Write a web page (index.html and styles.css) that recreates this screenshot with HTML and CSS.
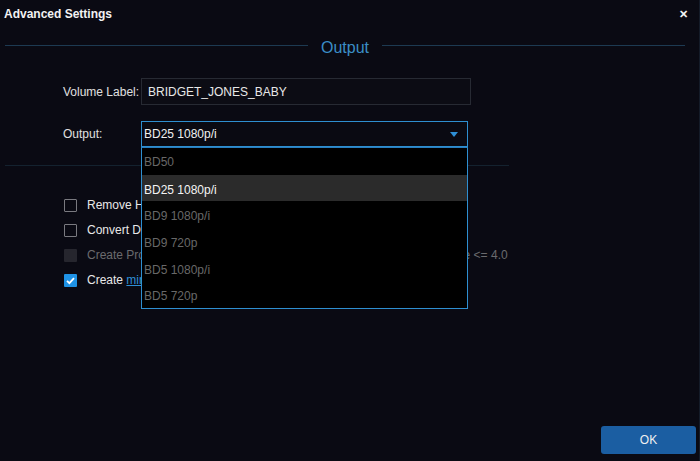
FILE: index.html
```html
<!DOCTYPE html>
<html>
<head>
<meta charset="utf-8">
<link rel="stylesheet" href="styles.css">
</head>
<body>
<div class="window">
  <div class="titlebar">
    <span class="title">Advanced Settings</span>
    <span class="close">&#x2715;</span>
  </div>
  <div class="section-head">
    <span class="line"></span>
    <span class="section-title">Output</span>
    <span class="line"></span>
  </div>
  <div class="form">
    <div class="row">
      <label class="lbl">Volume Label:</label>
      <div class="input">BRIDGET_JONES_BABY</div>
    </div>
    <div class="row row-output">
      <label class="lbl">Output:</label>
      <div class="select-wrap">
        <div class="select">
          <span>BD25 1080p/i</span>
          <svg class="arrow" width="8" height="5" viewBox="0 0 8 5"><path d="M0 0 L8 0 L4 5 Z" fill="#2e8fd6"/></svg>
        </div>
        <ul class="dropdown">
          <li>BD50</li>
          <li class="active">BD25 1080p/i</li>
          <li>BD9 1080p/i</li>
          <li>BD9 720p</li>
          <li>BD5 1080p/i</li>
          <li>BD5 720p</li>
        </ul>
      </div>
    </div>
  </div>
  <div class="divider"></div>
  <div class="checks">
    <div class="check"><span class="box"></span><span class="ctext">Remove HDR</span></div>
    <div class="check"><span class="box"></span><span class="ctext">Convert DTS</span></div>
    <div class="check disabled"><span class="box"></span><span class="ctext">Create Progressive streams for players that only support HD AVC profile &lt;= 4.0</span></div>
    <div class="check"><span class="box checked"><svg width="13" height="13" viewBox="0 0 13 13"><path d="M3 6.8 L5.4 9.2 L10 4.2" fill="none" stroke="#fff" stroke-width="1.8"/></svg></span><span class="ctext">Create <a class="link">mini ISO</a></span></div>
  </div>
  <div class="spacer"></div>
  <div class="footer">
    <button class="ok">OK</button>
  </div>
</div>
</body>
</html>
```
FILE: styles.css
```css
html, body {
  margin: 0;
  padding: 0;
  background: #0a0a13;
}
body {
  font-family: "Liberation Sans", Arial, sans-serif;
  font-size: 12px;
  color: #e6e6e6;
}
.window {
  width: 700px;
  height: 461px;
  display: flex;
  flex-direction: column;
  box-sizing: border-box;
  border-right: 1px solid #141b28;
  overflow: hidden;
}
.titlebar {
  height: 28px;
  display: flex;
  align-items: center;
  justify-content: space-between;
  padding: 0 11px 0 4px;
}
.title {
  font-weight: bold;
  font-size: 12px;
  color: #f2f2f2;
}
.close {
  font-weight: bold;
  font-size: 11px;
  color: #f2f2f2;
}
.section-head {
  height: 22px;
  margin-top: 8px;
  display: flex;
  align-items: center;
  padding: 0 14px 0 5px;
  gap: 13px;
}
.section-head .line {
  flex: 1;
  height: 1px;
  background: #1d3a52;
  margin-top: -4px;
}
.section-title {
  color: #3b8ec6;
  font-size: 16px;
  margin-top: 1px;
}
.form {
  margin-top: 20px;
  padding-left: 63px;
  display: flex;
  flex-direction: column;
  gap: 16px;
}
.row {
  display: flex;
  align-items: center;
}
.lbl {
  width: 78px;
  color: #e0e0e0;
}
.input {
  box-sizing: border-box;
  width: 330px;
  height: 27px;
  border: 1px solid #272a33;
  background: #0c0c14;
  display: flex;
  align-items: center;
  padding-left: 6px;
  color: #e8e8e8;
}
.select-wrap {
  position: relative;
}
.select {
  box-sizing: border-box;
  width: 327px;
  height: 26px;
  border: 1px solid #2e8fd0;
  background: #0a0a12;
  display: flex;
  align-items: center;
  justify-content: space-between;
  padding: 0 9px 0 2px;
  color: #f0f0f0;
}
.arrow {
  margin-top: 1px;
}
.dropdown {
  position: absolute;
  left: 0;
  top: 26px;
  z-index: 5;
  box-sizing: border-box;
  width: 327px;
  height: 162px;
  margin: 0;
  padding: 0;
  list-style: none;
  background: #000;
  border: 1px solid #2e8fd0;
  border-top-color: #2a7fc0;
}
.dropdown li {
  box-sizing: border-box;
  height: 26.7px;
  line-height: 26.7px;
  padding: 2px 0 0 2px;
  color: #686868;
}
.dropdown li:first-child {
  line-height: 29px;
  padding-top: 0;
}
.dropdown li.active {
  background: #2b2b2b;
  color: #f4f4f4;
}
.divider {
  height: 1px;
  background: #14222f;
  margin: 18px 190px 0 5px;
}
.checks {
  margin-top: 32px;
  padding-left: 64px;
  display: flex;
  flex-direction: column;
  gap: 11px;
}
.check {
  display: flex;
  align-items: center;
  height: 14px;
}
.box {
  width: 11px;
  height: 11px;
  border: 1px solid #7a7a80;
  border-radius: 1px;
  margin-right: 10px;
  display: flex;
  align-items: center;
  justify-content: center;
}
.box svg {
  display: block;
}
.box.checked {
  width: 13px;
  height: 13px;
  border: none;
  background: #1f93e6;
}
.check.disabled .box {
  width: 13px;
  height: 13px;
  border: none;
  background: #26262e;
}
.ctext {
  color: #e8e8e8;
  white-space: nowrap;
}
.check.disabled .ctext {
  color: #6a6a6e;
}
.link {
  color: #2e8fd6;
  text-decoration: underline;
}
.spacer {
  flex: 1;
}
.footer {
  display: flex;
  justify-content: flex-end;
  padding: 0 3px 7px 0;
}
.ok {
  width: 95px;
  height: 28px;
  border: none;
  border-radius: 3px;
  background: #1b5ea2;
  color: #f0f0f0;
  font-family: "Liberation Sans", Arial, sans-serif;
  font-size: 12px;
}
```
